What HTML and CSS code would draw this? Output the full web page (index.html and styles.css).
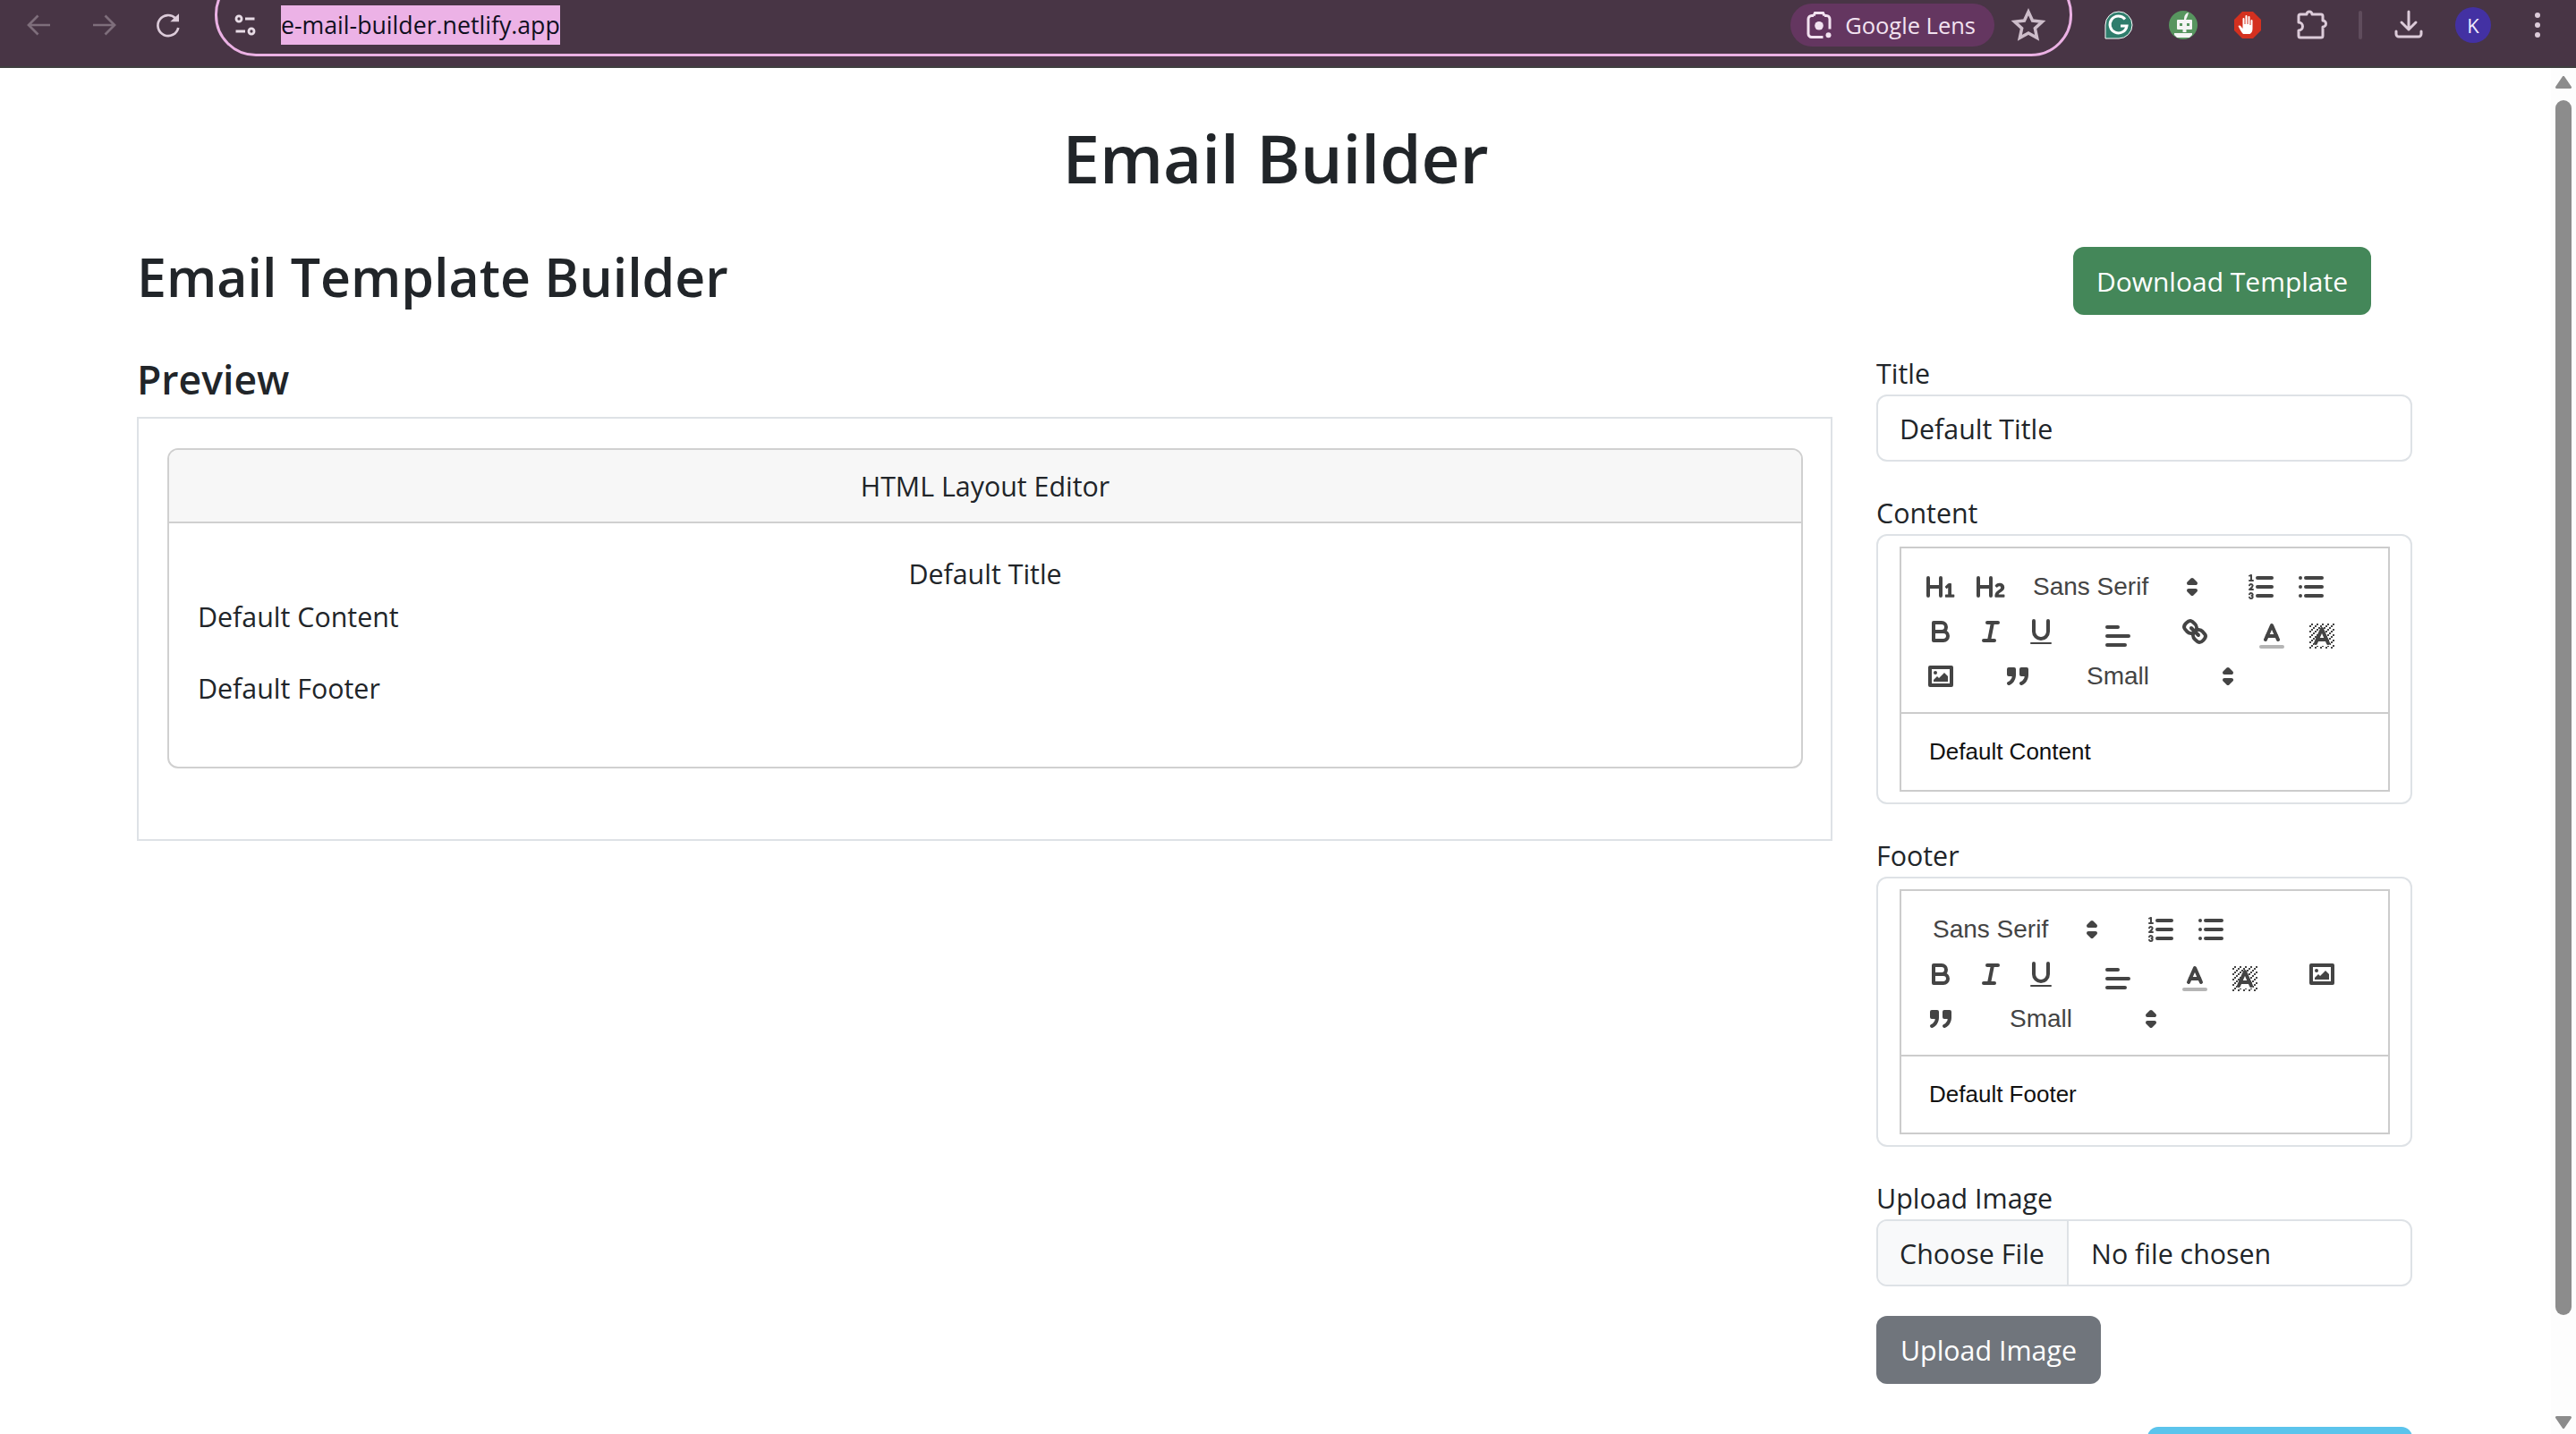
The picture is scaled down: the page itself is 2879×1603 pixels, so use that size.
FILE: index.html
```html
<!DOCTYPE html>
<html lang="en">
<head>
    <meta charset="UTF-8">
    <title>Email Builder</title>
    <link rel="stylesheet" href="styles.css">
</head>
<body>
    <!-- shared icons -->
    <svg class="icon-defs" xmlns="http://www.w3.org/2000/svg">
        <defs>
            <pattern id="dither" width="3" height="3" patternUnits="userSpaceOnUse">
                <rect class="fl" x="2" y="0" width="1" height="1"/>
                <rect class="fl" x="1" y="1" width="1" height="1"/>
                <rect class="fl" x="0" y="2" width="1" height="1"/>
            </pattern>
        </defs>
        <symbol id="i-h1" viewBox="0 0 18 18"><path class="fl" d="M10,4V14a1,1,0,0,1-2,0V10H3v4a1,1,0,0,1-2,0V4A1,1,0,0,1,3,4V8H8V4a1,1,0,0,1,2,0Zm6.06787,9.209H14.98975V7.59863a.54085.54085,0,0,0-.605-.60547h-.62744a1.01119,1.01119,0,0,0-.748.29688L11.645,8.56641a.5435.5435,0,0,0-.022.8584l.28613.30762a.53861.53861,0,0,0,.84717.0332l.09912-.08789a1.2137,1.2137,0,0,0,.2417-.35254h.02246s-.01123.30859-.01123.60547V13.209H12.041a.54085.54085,0,0,0-.605.60547v.43945a.54085.54085,0,0,0,.605.60547h4.02686a.54085.54085,0,0,0,.605-.60547v-.43945A.54085.54085,0,0,0,16.06787,13.209Z"/></symbol>
        <symbol id="i-h2" viewBox="0 0 18 18"><path class="fl" d="M16.73975,13.81445v.43945a.54085.54085,0,0,1-.605.60547H11.855a.58392.58392,0,0,1-.64893-.60547V14.0127c0-2.90527,3.39941-3.42187,3.39941-4.55469a.77675.77675,0,0,0-.84717-.78125,1.17684,1.17684,0,0,0-.83594.38477c-.2749.26367-.561.374-.85791.13184l-.4292-.34082c-.30811-.24219-.38525-.51758-.1543-.81445a2.97155,2.97155,0,0,1,2.45361-1.17676,2.45393,2.45393,0,0,1,2.68408,2.40918c0,2.45312-3.1792,2.92676-3.27832,3.93848h2.79443A.54085.54085,0,0,1,16.73975,13.81445ZM9,3A.99974.99974,0,0,0,8,4V8H3V4A1,1,0,0,0,1,4V14a1,1,0,0,0,2,0V10H8v4a1,1,0,0,0,2,0V4A.99974.99974,0,0,0,9,3Z"/></symbol>
        <symbol id="i-arrows" viewBox="0 0 18 18"><polygon class="st fl" points="7 11 9 13 11 11 7 11"/><polygon class="st fl" points="7 7 9 5 11 7 7 7"/></symbol>
        <symbol id="i-ol" viewBox="0 0 18 18"><line class="st" x1="7" x2="15" y1="4" y2="4"/><line class="st" x1="7" x2="15" y1="9" y2="9"/><line class="st" x1="7" x2="15" y1="14" y2="14"/><line class="st thin" x1="2.5" x2="4.5" y1="5.5" y2="5.5"/><path class="fl" d="M3.5,6A0.5,0.5,0,0,1,3,5.5V3.085l-0.276.138A0.5,0.5,0,0,1,2.053,3c-0.124-.247-0.023-0.324.224-0.447l1-.5A0.5,0.5,0,0,1,4,2.5v3A0.5,0.5,0,0,1,3.5,6Z"/><path class="st thin" d="M4.5,10.5h-2c0-.234,1.85-1.076,1.85-2.234A0.959,0.959,0,0,0,2.5,8.156"/><path class="st thin" d="M2.5,14.846a0.959,0.959,0,0,0,1.85-.109A0.7,0.7,0,0,0,3.75,14a0.688,0.688,0,0,0,.6-0.736,0.959,0.959,0,0,0-1.85-.109"/></symbol>
        <symbol id="i-ul" viewBox="0 0 18 18"><line class="st" x1="6" x2="15" y1="4" y2="4"/><line class="st" x1="6" x2="15" y1="9" y2="9"/><line class="st" x1="6" x2="15" y1="14" y2="14"/><line class="st" x1="3" x2="3" y1="4" y2="4"/><line class="st" x1="3" x2="3" y1="9" y2="9"/><line class="st" x1="3" x2="3" y1="14" y2="14"/></symbol>
        <symbol id="i-bold" viewBox="0 0 18 18"><path class="st" d="M5,4H9.5A2.5,2.5,0,0,1,12,6.5v0A2.5,2.5,0,0,1,9.5,9H5A0,0,0,0,1,5,9V4A0,0,0,0,1,5,4Z"/><path class="st" d="M5,9h5.5A2.5,2.5,0,0,1,13,11.5v0A2.5,2.5,0,0,1,10.5,14H5a0,0,0,0,1,0,0V9A0,0,0,0,1,5,9Z"/></symbol>
        <symbol id="i-italic" viewBox="0 0 18 18"><line class="st" x1="7" x2="13" y1="4" y2="4"/><line class="st" x1="5" x2="11" y1="14" y2="14"/><line class="st" x1="8" x2="10" y1="14" y2="4"/></symbol>
        <symbol id="i-underline" viewBox="0 0 18 18"><path class="st" d="M5,3V9a4.012,4.012,0,0,0,4,4H9a4.012,4.012,0,0,0,4-4V3"/><rect class="fl" height="1" rx="0.5" ry="0.5" width="12" x="3" y="15"/></symbol>
        <symbol id="i-align" viewBox="0 0 18 18"><line class="st" x1="3" x2="15" y1="9" y2="9"/><line class="st" x1="3" x2="13" y1="14" y2="14"/><line class="st" x1="3" x2="9" y1="4" y2="4"/></symbol>
        <symbol id="i-link" viewBox="0 0 18 18"><line class="st" x1="7" x2="11" y1="7" y2="11"/><path class="st" d="M8.9,4.577a3.476,3.476,0,0,1,.36,4.679A3.476,3.476,0,0,1,4.577,8.9C3.185,7.5,2.035,6.4,4.217,4.217S7.5,3.185,8.9,4.577Z"/><path class="st" d="M13.423,9.1a3.476,3.476,0,0,0-4.679-.36,3.476,3.476,0,0,0,.36,4.679c1.392,1.392,2.5,2.542,4.679.36S14.815,10.5,13.423,9.1Z"/></symbol>
        <symbol id="i-color" viewBox="0 0 18 18"><line class="st faint" x1="3" x2="15" y1="15" y2="15"/><polyline class="st" points="5.5 11 9 3 12.5 11"/><line class="st" x1="11.63" x2="6.38" y1="9" y2="9"/></symbol>
        <symbol id="i-bg" viewBox="0 0 18 18"><rect x="2" y="2" width="14" height="14" fill="url(#dither)"/><polygon class="knock" points="4.500,14.500 8.500,4 9.500,4 13.500,14.500"/><polyline class="st" points="5.5 13 9 5 12.5 13"/><line class="st" x1="11.63" x2="6.38" y1="11" y2="11"/></symbol>
        <symbol id="i-image" viewBox="0 0 18 18"><rect class="st" height="10" width="12" x="3" y="4"/><circle class="fl" cx="6" cy="7" r="1"/><polyline class="fl" points="5 12 5 11 7 9 8 10 11 7 13 9 13 12 5 12"/></symbol>
        <symbol id="i-quote" viewBox="0 0 18 18"><rect class="fl st" height="3" width="3" x="4" y="5"/><rect class="fl st" height="3" width="3" x="11" y="5"/><path class="st" d="M7,8c0,4.031-3,5-3,5"/><path class="st" d="M14,8c0,4.031-3,5-3,5"/></symbol>
    </svg>

    <header class="browser-bar">
        <span class="nav-btn">
            <svg class="nav-icon dim" viewBox="0 0 24 24"><path d="M20 12H5M11 5l-7 7 7 7"/></svg>
        </span>
        <span class="nav-btn">
            <svg class="nav-icon dim" viewBox="0 0 24 24"><path d="M4 12h15M13 5l7 7-7 7"/></svg>
        </span>
        <span class="nav-btn">
            <svg class="nav-icon" viewBox="0 0 24 24"><path d="M19.500 14A7.700 7.700 0 1 1 17.500 7"/><polygon class="reload-head" points="13.500,9.500 20,9.500 20,3.500"/></svg>
        </span>
        <div class="address-pill">
            <div class="address-row">
                <svg class="tune-icon" viewBox="0 0 24 24"><circle cx="6" cy="6" r="2.6"/><path d="M12 6h9M3 18h9"/><circle cx="18" cy="18" r="2.6"/></svg>
                <span class="url-text">e-mail-builder.netlify.app</span>
                <span class="lens-pill">
                    <svg class="lens-icon" viewBox="0 0 24 24"><path d="M8 5H6.500A2.500 2.500 0 0 0 4 7.500V18.500A2.500 2.500 0 0 0 6.500 21H15M16 5h1.500A2.500 2.500 0 0 1 20 7.500V15M8 5l1-2h6l1 2"/><circle cx="12" cy="12.500" r="3.200" class="lens-dot"/><circle cx="19" cy="19.500" r="2" class="lens-dot"/></svg>
                    Google Lens
                </span>
                <svg class="star-icon" viewBox="0 0 24 24"><path d="M12 3.500l2.600 5.700 6.200.7-4.600 4.200 1.300 6.100L12 17.100l-5.500 3.100 1.300-6.100-4.600-4.200 6.200-.7z"/></svg>
            </div>
        </div>
        <span class="ext-btn">
            <svg class="ext-icon" viewBox="0 0 32 32"><path class="g-body" d="M16 1a15 15 0 0 1 0 30H1V16A15 15 0 0 1 16 1z"/><path class="g-letter" d="M23 9.500A9.500 9.500 0 1 0 25 17h-7"/></svg>
        </span>
        <span class="ext-btn">
            <svg class="ext-icon" viewBox="0 0 32 32"><circle class="bot-bg" cx="16" cy="16" r="16"/><rect class="bot-white" x="9" y="10" width="17" height="11" rx="1"/><rect class="bot-bg" x="12" y="14" width="3" height="3"/><rect class="bot-bg" x="20" y="14" width="3" height="3"/><path class="bot-white" d="M17 10c0-4 1-7 5-8-1 4-2 6-3 8z"/><rect class="bot-white" x="15.500" y="21" width="4" height="3"/><path class="bot-white" d="M6 25h20v2l-3 3H9l-3-3z"/></svg>
        </span>
        <span class="ext-btn">
            <svg class="ext-icon" viewBox="0 0 32 32"><polygon class="stop-bg" points="10,1 22,1 31,10 31,22 22,31 10,31 1,22 1,10"/><path class="stop-hand" d="M11 26c-2-2-4-6-5.500-9 1-1 2.500-.5 3 .5l2 2.500V9c0-1.500 2-1.500 2 0v6h1V6c0-1.500 2-1.500 2 0v9h1V7c0-1.500 2-1.500 2 0v9h1V11c0-1.500 2-1.500 2 0v9c0 3-1 5-3 6z"/></svg>
        </span>
        <span class="ext-btn">
            <svg class="ext-icon puzzle" viewBox="0 0 32 32"><path d="M3 4h7a3 3 0 0 1 6 0h10a2 2 0 0 1 2 2v5a3.500 3.500 0 0 1 0 7v10a2 2 0 0 1-2 2H3a2 2 0 0 1-2-2v-6a4.500 4.500 0 0 0 0-9V6a2 2 0 0 1 2-2z"/></svg>
        </span>
        <span class="bar-divider"></span>
        <span class="ext-btn">
            <svg class="ext-icon puzzle" viewBox="0 0 32 32"><path d="M16 1v20M8 13l8 8 8-8M2 23v3a3 3 0 0 0 3 3h22a3 3 0 0 0 3-3v-3"/></svg>
        </span>
        <span class="ext-btn"><span class="avatar">K</span></span>
        <span class="ext-btn">
            <svg class="ext-icon" viewBox="0 0 32 32"><circle class="menu-dot" cx="16" cy="5" r="3"/><circle class="menu-dot" cx="16" cy="16" r="3"/><circle class="menu-dot" cx="16" cy="27" r="3"/></svg>
        </span>
    </header>

    <div class="viewport">
        <main class="content">
            <h1 class="page-title">Email Builder</h1>
            <div class="builder-head">
                <h2 class="builder-title">Email Template Builder</h2>
                <button class="btn btn-green">Download Template</button>
            </div>
            <div class="builder-grid">
                <section>
                    <h4 class="preview-title">Preview</h4>
                    <div class="preview-box">
                        <div class="card">
                            <div class="card-head">HTML Layout Editor</div>
                            <div class="card-body">
                                <p class="card-center">Default Title</p>
                                <p class="card-line">Default Content</p>
                                <p class="card-line">Default Footer</p>
                            </div>
                        </div>
                    </div>
                </section>
                <section>
                    <div class="field">
                        <label class="field-label">Title</label>
                        <input class="text-input" type="text" value="Default Title">
                    </div>
                    <div class="field">
                        <label class="field-label">Content</label>
                        <div class="editor-box">
                            <div class="editor">
                                <div class="toolbar">
                                    <div class="tool-row">
                                        <span class="tool-btn"><svg><use href="#i-h1"/></svg></span>
                                        <span class="tool-btn"><svg><use href="#i-h2"/></svg></span>
                                        <span class="picker picker-font">Sans Serif<svg><use href="#i-arrows"/></svg></span>
                                        <span class="tool-btn"><svg><use href="#i-ol"/></svg></span>
                                        <span class="tool-btn"><svg><use href="#i-ul"/></svg></span>
                                    </div>
                                    <div class="tool-row">
                                        <span class="tool-btn"><svg><use href="#i-bold"/></svg></span>
                                        <span class="tool-btn"><svg><use href="#i-italic"/></svg></span>
                                        <span class="tool-btn group-end"><svg><use href="#i-underline"/></svg></span>
                                        <span class="tool-btn low group-end"><svg><use href="#i-align"/></svg></span>
                                        <span class="tool-btn group-end"><svg><use href="#i-link"/></svg></span>
                                        <span class="tool-btn low"><svg><use href="#i-color"/></svg></span>
                                        <span class="tool-btn low"><svg><use href="#i-bg"/></svg></span>
                                    </div>
                                    <div class="tool-row">
                                        <span class="tool-btn group-end"><svg><use href="#i-image"/></svg></span>
                                        <span class="tool-btn group-end"><svg><use href="#i-quote"/></svg></span>
                                        <span class="picker picker-size">Small<svg><use href="#i-arrows"/></svg></span>
                                    </div>
                                </div>
                                <div class="editor-text">Default Content</div>
                            </div>
                        </div>
                    </div>
                    <div class="field">
                        <label class="field-label">Footer</label>
                        <div class="editor-box">
                            <div class="editor">
                                <div class="toolbar">
                                    <div class="tool-row">
                                        <span class="picker picker-font">Sans Serif<svg><use href="#i-arrows"/></svg></span>
                                        <span class="tool-btn"><svg><use href="#i-ol"/></svg></span>
                                        <span class="tool-btn"><svg><use href="#i-ul"/></svg></span>
                                    </div>
                                    <div class="tool-row">
                                        <span class="tool-btn"><svg><use href="#i-bold"/></svg></span>
                                        <span class="tool-btn"><svg><use href="#i-italic"/></svg></span>
                                        <span class="tool-btn group-end"><svg><use href="#i-underline"/></svg></span>
                                        <span class="tool-btn low group-end"><svg><use href="#i-align"/></svg></span>
                                        <span class="tool-btn low"><svg><use href="#i-color"/></svg></span>
                                        <span class="tool-btn low group-end"><svg><use href="#i-bg"/></svg></span>
                                        <span class="tool-btn"><svg><use href="#i-image"/></svg></span>
                                    </div>
                                    <div class="tool-row">
                                        <span class="tool-btn group-end"><svg><use href="#i-quote"/></svg></span>
                                        <span class="picker picker-size">Small<svg><use href="#i-arrows"/></svg></span>
                                    </div>
                                </div>
                                <div class="editor-text">Default Footer</div>
                            </div>
                        </div>
                    </div>
                    <div class="field upload-field">
                        <label class="field-label">Upload Image</label>
                        <div class="file-input">
                            <span class="file-btn">Choose File</span>
                            <span class="file-name">No file chosen</span>
                        </div>
                    </div>
                    <button class="btn btn-grey">Upload Image</button>
                    <div class="save-row">
                        <button class="btn btn-blue"></button>
                    </div>
                </section>
            </div>
        </main>
        <aside class="scrollbar">
            <svg class="scroll-arrow" viewBox="0 0 18 14"><polygon class="arrow-shape" points="9,1.500 16.500,12.500 1.500,12.500"/></svg>
            <div class="scroll-thumb"></div>
            <svg class="scroll-arrow" viewBox="0 0 18 14"><polygon class="arrow-shape" points="1.500,1.500 16.500,1.500 9,12.500"/></svg>
        </aside>
    </div>
</body>
</html>
```

FILE: styles.css
```css
* {
    box-sizing: border-box;
}
html, body {
    margin: 0;
    height: 100%;
}
body {
    display: flex;
    flex-direction: column;
    overflow: hidden;
    background: #fff;
    color: #212529;
    font-family: "Open Sans", "Noto Sans", sans-serif;
    font-size: 30.4px;
}
.icon-defs {
    position: absolute;
    width: 0;
    height: 0;
}

/* icon parts, same names for every quill glyph */
.st {
    fill: none;
    stroke: #444;
    stroke-width: 2;
    stroke-linecap: round;
    stroke-linejoin: round;
}
.fl {
    fill: #444;
}
.st.fl {
    fill: #444;
}
.thin {
    stroke-width: 1;
}
.faint {
    stroke: #b5b5b5;
}
.knock {
    fill: #fff;
}

/* browser chrome */
.browser-bar {
    display: flex;
    flex: none;
    align-items: flex-start;
    height: 76px;
    padding-left: 8px;
    background: #483545;
    border-bottom: 2px solid #3f3f3f;
}
.nav-btn {
    display: flex;
    flex: none;
    align-items: center;
    justify-content: center;
    width: 72px;
    height: 56px;
}
.nav-icon {
    width: 36px;
    height: 36px;
    fill: none;
    stroke: #dccbd9;
    stroke-width: 1.8;
}
.nav-icon.dim {
    stroke: #7e6e7b;
}
.reload-head {
    fill: #dccbd9;
    stroke: none;
}
.address-pill {
    display: flex;
    flex: none;
    flex-direction: column;
    justify-content: flex-end;
    width: 2076px;
    height: 93px;
    margin: -30px 16px 0;
    padding: 0 17px 8px 17px;
    border: 3px solid #ebb1e4;
    border-radius: 46px;
}
.address-row {
    display: flex;
    align-items: center;
    height: 48px;
}
.tune-icon {
    flex: none;
    width: 28px;
    height: 28px;
    margin-right: 26px;
    fill: none;
    stroke: #e8dce6;
    stroke-width: 2.4;
}
.url-text {
    padding: 5px 0;
    background: #ecb2e6;
    color: #10101e;
    font-size: 26.7px;
    line-height: 34px;
}
.lens-pill {
    display: flex;
    align-items: center;
    height: 48px;
    margin-left: auto;
    padding: 0 21px 0 14px;
    border-radius: 24px;
    background: #643660;
    color: #f2e2f0;
    font-size: 25.5px;
}
.lens-icon {
    width: 36px;
    height: 36px;
    margin-right: 11px;
    fill: none;
    stroke: #f2e2f0;
    stroke-width: 2;
}
.lens-dot {
    fill: #f2e2f0;
    stroke: none;
}
.star-icon {
    width: 42px;
    height: 42px;
    margin: 0 8px 0 17px;
    fill: none;
    stroke: #cdbdca;
    stroke-width: 2;
}
.ext-btn {
    display: flex;
    flex: none;
    align-items: center;
    justify-content: center;
    width: 72px;
    height: 56px;
}
.ext-icon {
    width: 32px;
    height: 32px;
    overflow: visible;
}
.ext-icon.puzzle {
    fill: none;
    stroke: #dccbd9;
    stroke-width: 3;
    stroke-linecap: round;
    stroke-linejoin: round;
}
.g-body {
    fill: #2f7d6c;
    stroke: #fff;
    stroke-width: 1;
}
.g-letter {
    fill: none;
    stroke: #fff;
    stroke-width: 3;
}
.bot-bg {
    fill: #57955f;
}
.bot-white {
    fill: #f4f4f4;
}
.stop-bg {
    fill: #d4301f;
}
.stop-hand {
    fill: #fff;
}
.menu-dot {
    fill: #dccbd9;
}
.bar-divider {
    flex: none;
    width: 4px;
    height: 32px;
    margin: 12px 16px 0;
    border-radius: 2px;
    background: #5f4c5c;
}
.avatar {
    display: flex;
    align-items: center;
    justify-content: center;
    width: 40px;
    height: 40px;
    border-radius: 50%;
    background: #4331a3;
    color: #f0ecff;
    font-size: 22px;
}

/* page */
.viewport {
    display: flex;
    flex: 1;
    min-height: 0;
    overflow: hidden;
}
.content {
    flex: 1;
    min-width: 0;
    padding: 52px 155px 0 153px;
}
.page-title {
    margin: 0 -155px 48px -153px;
    font-size: 74.5px;
    font-weight: 600;
    line-height: 96px;
    text-align: center;
}
.builder-head {
    display: flex;
    align-items: flex-start;
    justify-content: space-between;
    height: 80px;
    margin-bottom: 43px;
}
.builder-title {
    margin: 0;
    font-size: 59px;
    font-weight: 600;
    line-height: 75px;
}
.builder-grid {
    display: grid;
    grid-template-columns: 1895px 599px;
    column-gap: 49px;
}
.preview-title {
    margin: 0 0 13px;
    font-size: 44.5px;
    font-weight: 600;
    line-height: 58px;
}
.preview-box {
    height: 474px;
    padding: 33px 31px 0 32px;
    border: 2px solid #dee2e6;
}
.card {
    border: 2px solid #d0d0d0;
    border-radius: 12px;
    overflow: hidden;
}
.card-head {
    height: 82px;
    border-bottom: 2px solid #d0d0d0;
    background: #f7f7f7;
    line-height: 81px;
    text-align: center;
}
.card-body {
    height: 272px;
    padding: 33px 32px 0;
}
.card-center {
    margin: 0;
    line-height: 48px;
    text-align: center;
}
.card-line {
    margin: 0 0 32px;
    line-height: 48px;
}

/* right column */
.field {
    margin-bottom: 36px;
}
.field-label {
    display: block;
    height: 45px;
    margin-top: 1px;
    line-height: 44px;
}
.text-input {
    display: block;
    width: 100%;
    height: 75px;
    padding: 2px 24px 0;
    border: 2px solid #dee2e6;
    border-radius: 12px;
    color: #212529;
    font-family: inherit;
    font-size: 30.4px;
}
.editor-box {
    padding: 12px 23px 12px 24px;
    border: 2px solid #dee2e6;
    border-radius: 12px;
}
.editor {
    border: 2px solid #ccc;
}
.toolbar {
    display: flex;
    flex-direction: column;
    gap: 2px;
    height: 185px;
    padding: 19px 16px 0;
    border-bottom: 2px solid #ccc;
}
.tool-row {
    display: flex;
    align-items: center;
    height: 48px;
}
.tool-btn {
    flex: none;
    width: 56px;
    height: 48px;
    padding: 6px 10px;
}
.tool-btn svg,
.picker svg {
    display: block;
    width: 36px;
    height: 36px;
}
.tool-btn.group-end {
    margin-right: 30px;
}
.tool-btn.low {
    height: 58px;
    padding-top: 16px;
}
.picker {
    display: flex;
    flex: none;
    align-items: center;
    justify-content: space-between;
    height: 48px;
    margin-left: 3px;
    padding: 0 4px 0 16px;
    color: #444;
    font-family: "Liberation Sans", Arial, sans-serif;
    font-size: 28px;
}
.picker-font {
    width: 216px;
    margin-right: 27px;
}
.picker-size {
    width: 196px;
}
.editor-text {
    display: flex;
    align-items: center;
    height: 85px;
    padding-left: 31px;
    color: #111;
    font-family: "Liberation Sans", Arial, sans-serif;
    font-size: 26px;
}
.file-input {
    display: flex;
    height: 75px;
    border: 2px solid #dee2e6;
    border-radius: 12px;
    line-height: 73px;
    overflow: hidden;
}
.file-btn {
    width: 213px;
    padding-left: 24px;
    border-right: 2px solid #dee2e6;
    background: #f8f9fa;
}
.file-name {
    padding-left: 25px;
}
.upload-field {
    margin-bottom: 33px;
}

/* buttons */
.btn {
    height: 76px;
    padding: 0;
    border: 0;
    border-radius: 12px;
    color: #fff;
    font-family: inherit;
    font-size: 30.4px;
    white-space: nowrap;
}
.btn-green {
    width: 333px;
    margin: 4px 46px 0 0;
    background: #448759;
    font-size: 30px;
}
.btn-grey {
    display: block;
    width: 251px;
    background: #70757c;
}
.btn-blue {
    width: 296px;
    background: #5bc4ec;
}
.save-row {
    display: flex;
    justify-content: flex-end;
    margin-top: 48px;
}

/* fake scrollbar */
.scrollbar {
    display: flex;
    flex: none;
    flex-direction: column;
    align-items: center;
    width: 28px;
    padding: 9px 5px 0;
    background: #fdfdfd;
}
.scroll-arrow {
    flex: none;
    width: 18px;
    height: 14px;
}
.arrow-shape {
    fill: #8c8c8c;
    stroke: #8c8c8c;
    stroke-width: 3;
    stroke-linejoin: round;
}
.scroll-thumb {
    flex: none;
    width: 18px;
    height: 1358px;
    margin: 13px 0 113px;
    border-radius: 9px;
    background: #8c8c8c;
}
```
